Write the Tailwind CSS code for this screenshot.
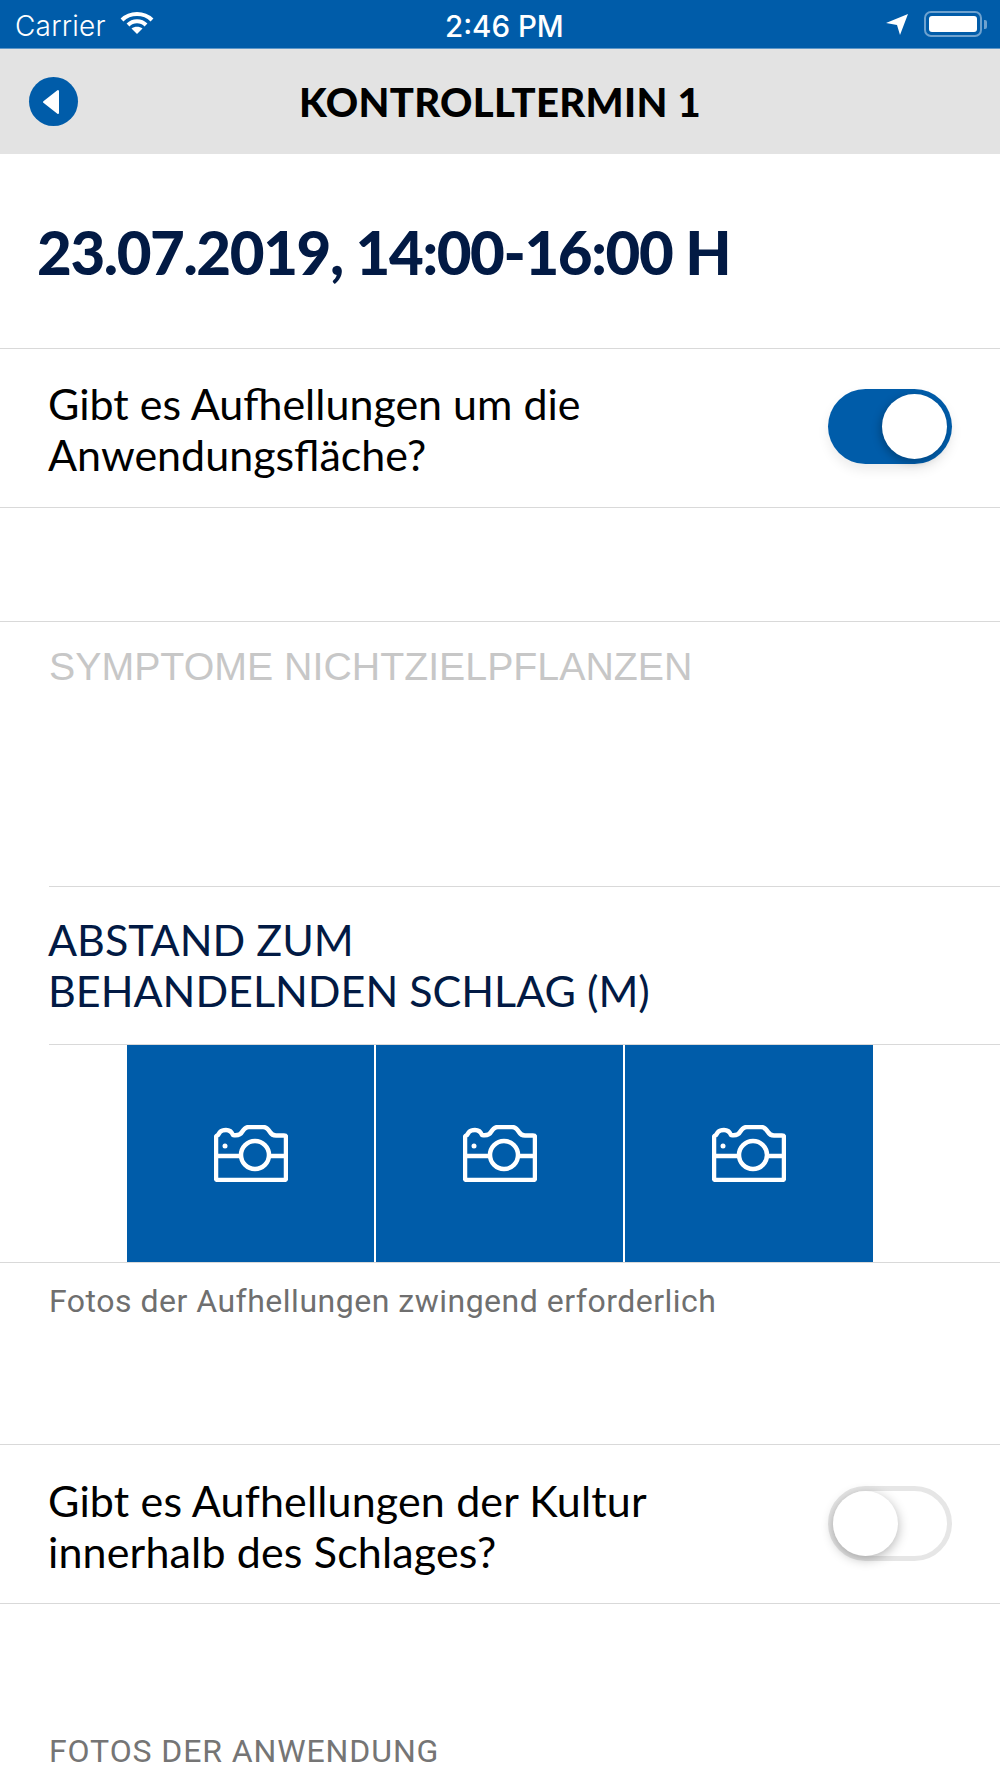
<!DOCTYPE html>
<html lang="en">
<head>
<meta charset="UTF-8" />
<meta name="viewport" content="width=device-width, initial-scale=1" />
<title>Kontrolltermin 1</title>
<script src="https://cdn.jsdelivr.net/npm/@tailwindcss/browser@4"></script>
</head>
<body class="bg-white font-['Lato',sans-serif]">
<div class="w-[1000px] h-[1778px] overflow-hidden flex flex-col">

  <!-- status bar -->
  <div class="h-[49px] bg-[#005ca9] border-b border-[#5e97c8] flex items-center justify-between pl-[15px] pr-[13px] pt-[3px] text-white font-['Inter',sans-serif] relative shrink-0">
    <div class="flex items-center gap-[14px]">
      <span class="text-[28px] font-light tracking-[0.2px]">Carrier</span>
      <svg class="w-[34px] h-[24px] mb-[5px]" viewBox="0 0 34 24" fill="none" stroke="white" stroke-width="4">
        <path d="M2 9 C10 1 24 1 32 9" />
        <path d="M8 14 C13 9 21 9 26 14" />
        <path d="M17 23 L11.5 17.5 C14.5 15 19.500 15 22.500 17.500 Z" fill="white" stroke="none" />
      </svg>
    </div>
    <span class="absolute left-[445px] top-[9px] text-[29.500px] leading-[34px] font-medium">2:46 PM</span>
    <div class="flex items-center gap-[15px] mb-[3px]">
      <svg class="w-[24px] h-[22px]" viewBox="0 0 24 22" fill="white"><path d="M1 10 L23 1 L15 22 L12 12 Z" /></svg>
      <div class="flex items-center gap-[2px]">
        <div class="w-[58px] h-[26px] rounded-[7px] border-2 border-[#6ea2cf] p-[3px]">
          <div class="w-full h-full bg-white rounded-[3px]"></div>
        </div>
        <div class="w-[3px] h-[9px] bg-[#6ea2cf] rounded-r-[2px]"></div>
      </div>
    </div>
  </div>

  <!-- nav bar -->
  <div class="h-[105px] bg-[#e3e3e3] relative flex items-center justify-center shrink-0">
    <div class="absolute left-[29px] top-[28px] w-[49px] h-[49px] rounded-full bg-[#005ca9] flex items-center justify-center">
      <svg class="w-[18px] h-[26px] mr-[5px]" viewBox="0 0 18 26" fill="white" stroke="white" stroke-width="2" stroke-linejoin="round"><path d="M16 2 V24 L2 13 Z" /></svg>
    </div>
    <span class="text-[40px] font-black text-black tracking-[0.3px]">KONTROLLTERMIN 1</span>
  </div>

  <!-- date -->
  <div class="h-[195px] px-[37px] flex items-center border-b border-[#d9d9d9] shrink-0">
    <h1 class="text-[60px] font-black text-[#021a44] leading-none tracking-[-1.4px] mt-[1px]">23.07.2019, 14:00-16:00 H</h1>
  </div>

  <!-- question 1 -->
  <div class="h-[159px] pl-[48px] pr-[48px] flex items-center justify-between border-b border-[#d9d9d9] shrink-0">
    <p class="text-[43px] leading-[51px] text-black pt-[2px]">Gibt es Aufhellungen um die<br />Anwendungsfläche?</p>
    <div class="relative w-[124px] h-[75px] rounded-full bg-[#005ca9] mb-[4px] shadow-[0_6px_12px_rgba(0,0,0,0.08)]">
      <div class="absolute right-[5px] top-[5px] w-[65px] h-[65px] rounded-full bg-white shadow-[-2px_3px_8px_rgba(0,0,0,0.25)]"></div>
    </div>
  </div>

  <div class="h-[114px] border-b border-[#d9d9d9] shrink-0"></div>

  <!-- symptome -->
  <div class="h-[265px] pl-[49px] shrink-0">
    <div class="border-b border-[#d9d9d9] h-full pt-[20px]">
      <p class="text-[39.300px] leading-[48px] text-[#c7c7c7] font-['Liberation_Sans',sans-serif]">SYMPTOME NICHTZIELPFLANZEN</p>
    </div>
  </div>

  <!-- abstand -->
  <div class="h-[158px] pl-[49px] shrink-0">
    <div class="border-b border-[#d9d9d9] h-full pt-[27px]">
      <p class="text-[43px] leading-[51px] text-[#021a44] -ml-[1px]">ABSTAND ZUM<br />BEHANDELNDEN SCHLAG (M)</p>
    </div>
  </div>

  <!-- photos -->
  <div class="h-[218px] border-b border-[#d9d9d9] flex justify-center gap-[2px] shrink-0">
    <div class="w-[247px] bg-[#005ca9] flex items-center justify-center">
      <svg class="w-[74px] h-[57px]" viewBox="0 0 74 57" fill="none" stroke="white" stroke-width="4.500" stroke-linejoin="round"><path d="M2 12 Q2 11 4 10 L6 7 Q8 5 12 5 Q17 5 19 10 Q26 11 28 7 Q31 2 35 2 H49 Q53 2 56 7 Q58 10.500 62 10.500 H70 Q72 10.500 72 12 V53 Q72 55 70 55 H4 Q2 55 2 53 Z" /><circle cx="41" cy="30" r="14" /><path d="M2 31 H27 M55 31 H72" /><circle cx="11" cy="21" r="2.500" fill="white" stroke="none" /></svg>
    </div>
    <div class="w-[247px] bg-[#005ca9] flex items-center justify-center">
      <svg class="w-[74px] h-[57px]" viewBox="0 0 74 57" fill="none" stroke="white" stroke-width="4.500" stroke-linejoin="round"><path d="M2 12 Q2 11 4 10 L6 7 Q8 5 12 5 Q17 5 19 10 Q26 11 28 7 Q31 2 35 2 H49 Q53 2 56 7 Q58 10.500 62 10.500 H70 Q72 10.500 72 12 V53 Q72 55 70 55 H4 Q2 55 2 53 Z" /><circle cx="41" cy="30" r="14" /><path d="M2 31 H27 M55 31 H72" /><circle cx="11" cy="21" r="2.500" fill="white" stroke="none" /></svg>
    </div>
    <div class="w-[248px] bg-[#005ca9] flex items-center justify-center">
      <svg class="w-[74px] h-[57px]" viewBox="0 0 74 57" fill="none" stroke="white" stroke-width="4.500" stroke-linejoin="round"><path d="M2 12 Q2 11 4 10 L6 7 Q8 5 12 5 Q17 5 19 10 Q26 11 28 7 Q31 2 35 2 H49 Q53 2 56 7 Q58 10.500 62 10.500 H70 Q72 10.500 72 12 V53 Q72 55 70 55 H4 Q2 55 2 53 Z" /><circle cx="41" cy="30" r="14" /><path d="M2 31 H27 M55 31 H72" /><circle cx="11" cy="21" r="2.500" fill="white" stroke="none" /></svg>
    </div>
  </div>

  <!-- caption -->
  <div class="h-[182px] pl-[49px] pt-[19px] border-b border-[#d9d9d9] shrink-0">
    <p class="text-[32px] leading-[38px] text-[#6f6f6f] tracking-[0.5px] font-['Roboto',sans-serif]">Fotos der Aufhellungen zwingend erforderlich</p>
  </div>

  <!-- question 2 -->
  <div class="h-[159px] pl-[48px] pr-[48px] flex items-center justify-between border-b border-[#d9d9d9] shrink-0">
    <p class="text-[43px] leading-[51px] text-black tracking-[0.15px] pt-[3px]">Gibt es Aufhellungen der Kultur<br />innerhalb des Schlages?</p>
    <div class="relative w-[124px] h-[75px] rounded-full bg-white border-[5px] border-[#e6e6e6] mb-[2px]">
      <div class="absolute left-0 top-0 w-[65px] h-[65px] rounded-full bg-white shadow-[0_3px_12px_rgba(0,0,0,0.3)]"></div>
    </div>
  </div>

  <div class="pl-[49px] pt-[128px]">
    <p class="text-[32px] leading-[38px] text-[#757575] font-['Roboto',sans-serif] tracking-[0.9px]">FOTOS DER ANWENDUNG</p>
  </div>
</div>
</body>
</html>
